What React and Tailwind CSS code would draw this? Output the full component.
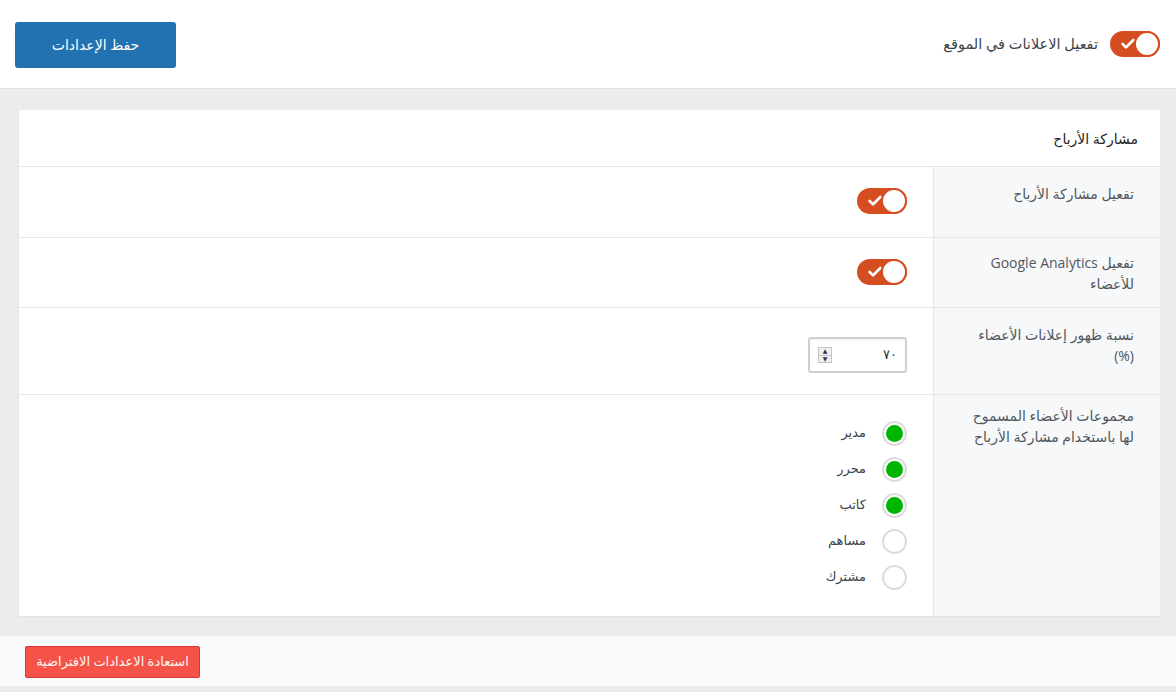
import { Check } from 'lucide-react';

const Toggle = () => (
  <div className="relative flex h-[26px] w-[50px] items-center rounded-full bg-[#d54e21]">
    <Check className="absolute left-[10px] h-[16px] w-[16px] text-white" strokeWidth={4} />
    <div className="absolute right-0 top-0 h-[26px] w-[26px] rounded-full border-2 border-[#d54e21] bg-white" />
  </div>
);

const Radio = ({ label, checked }) => (
  <div className="flex h-[36px] items-center gap-[16px]">
    <div className="flex h-[25px] w-[25px] items-center justify-center rounded-full border-2 border-[#dcdcde] bg-white">
      {checked && <div className="h-[17px] w-[17px] rounded-full bg-[#00b500]" />}
    </div>
    <span className="text-[13px] text-[#3c434a]">{label}</span>
  </div>
);

const Row = ({ label, children, className = '', labelClass = 'pt-[16px]' }) => (
  <div className="grid grid-cols-[227px_1fr] border-t border-[#e5e7ea]">
    <div className={`border-l border-[#e5e7ea] bg-[#f7f8fa] pr-[26px] pl-[34px] text-[14px] leading-[21px] text-[#50575e] ${labelClass}`}>
      {label}
    </div>
    <div className={`pr-[26px] ${className}`}>{children}</div>
  </div>
);

export default function App() {
  const groups = [
    { label: 'مدير', checked: true },
    { label: 'محرر', checked: true },
    { label: 'كاتب', checked: true },
    { label: 'مساهم', checked: false },
    { label: 'مشترك', checked: false },
  ];

  return (
    <div dir="rtl" className="min-h-[692px] bg-[#ebecee] font-['Open_Sans','Noto_Sans','DejaVu_Sans',sans-serif]">
      <div className="flex h-[89px] items-center justify-between border-b border-[#e0e2e5] bg-white pr-[16px] pl-[15px]">
        <div className="flex items-center gap-[12px]">
          <Toggle />
          <span className="text-[14.5px] text-[#3c434a]">تفعيل الاعلانات في الموقع</span>
        </div>
        <button className="mt-[1px] h-[46px] w-[161px] rounded-[3px] bg-[#2271b1] text-[14px] text-white">
          حفظ الإعدادات
        </button>
      </div>

      <div className="pt-[21px] pr-[16px] pb-[20px] pl-[19px]">
        <div className="bg-white shadow-[0_1px_1px_rgba(0,0,0,0.04)]">
          <div className="flex h-[56px] items-center pr-[22px] text-[14px] font-medium text-[#1d2327]">
            مشاركة الأرباح
          </div>
          <Row label="تفعيل مشاركة الأرباح" className="h-[70px] pt-[21px]">
            <Toggle />
          </Row>
          <Row label="تفعيل Google Analytics للأعضاء" className="h-[69px] pt-[21px]" labelClass="pt-[14px]">
            <Toggle />
          </Row>
          <Row label="نسبة ظهور إعلانات الأعضاء (%)" className="h-[86px] pt-[29px]">
            <div className="flex h-[36px] w-[99px] items-center justify-between rounded-[3px] border-2 border-[#cdd0d3] px-[8px] shadow-[inset_0_1px_2px_rgba(0,0,0,0.07)]">
              <span className="text-[13px] text-[#2c3338]">٧٠</span>
              <div className="flex h-[16px] w-[14px] flex-col border border-[#c3c4c7] bg-[#f0f0f1]">
                <div className="flex flex-1 items-center justify-center border-b border-[#c3c4c7] text-[6px] leading-none text-[#333]">▲</div>
                <div className="flex flex-1 items-center justify-center text-[6px] leading-none text-[#333]">▼</div>
              </div>
            </div>
          </Row>
          <Row label="مجموعات الأعضاء المسموح لها باستخدام مشاركة الأرباح" className="h-[221px] pt-[20px]" labelClass="pt-[10px]">
            <div className="flex flex-col">
              {groups.map(g => (
                <Radio key={g.label} label={g.label} checked={g.checked} />
              ))}
            </div>
          </Row>
        </div>
      </div>

      <div className="flex h-[56px] items-center border-b-[6px] border-[#ebecee] bg-[#f9fafb] pl-[25px]" dir="ltr">
        <button className="mt-[2px] h-[32px] w-[175px] rounded-[2px] border border-[#d63638] bg-[#f5534a] text-[13px] text-[#fff3ef]">
          استعادة الاعدادات الافتراضية
        </button>
      </div>
    </div>
  );
}
